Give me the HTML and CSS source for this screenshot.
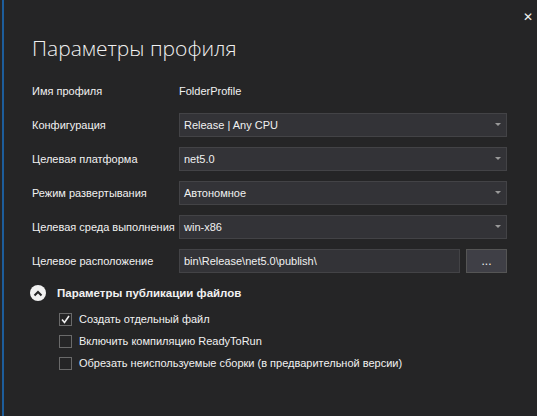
FILE: index.html
```html
<!DOCTYPE html>
<html lang="ru">
<head>
    <meta charset="UTF-8">
    <title>Параметры профиля</title>
    <link rel="stylesheet" href="styles.css">
</head>
<body>
    <div class="edge"></div>
    <div class="dialog">
        <button class="close">&#x2715;</button>
        <h1>Параметры профиля</h1>
        <div class="form">
            <div class="row">
                <label>Имя профиля</label>
                <span class="plain">FolderProfile</span>
            </div>
            <div class="row">
                <label>Конфигурация</label>
                <div class="select">Release | Any CPU<span class="arrow"></span></div>
            </div>
            <div class="row">
                <label>Целевая платформа</label>
                <div class="select">net5.0<span class="arrow"></span></div>
            </div>
            <div class="row">
                <label>Режим развертывания</label>
                <div class="select">Автономное<span class="arrow"></span></div>
            </div>
            <div class="row">
                <label>Целевая среда выполнения</label>
                <div class="select">win-x86<span class="arrow"></span></div>
            </div>
            <div class="row">
                <label>Целевое расположение</label>
                <div class="path">
                    <div class="text-box">bin\Release\net5.0\publish\</div>
                    <button class="browse">...</button>
                </div>
            </div>
        </div>
        <div class="expander">
            <span class="toggle">
                <svg width="10" height="7" viewBox="0 0 10 7"><path d="M1.5 5.5 L5 2 L8.5 5.5" fill="none" stroke="#252526" stroke-width="2"/></svg>
            </span>
            <span class="expander-title">Параметры публикации файлов</span>
        </div>
        <div class="options">
            <div class="check-row">
                <span class="check checked">
                    <svg width="11" height="11" viewBox="0 0 11 11"><path d="M2 5.5 L4.5 8.5 L9 2" fill="none" stroke="#f1f1f1" stroke-width="1.6"/></svg>
                </span>
                <span>Создать отдельный файл</span>
            </div>
            <div class="check-row">
                <span class="check"></span>
                <span>Включить компиляцию ReadyToRun</span>
            </div>
            <div class="check-row">
                <span class="check"></span>
                <span>Обрезать неиспользуемые сборки (в предварительной версии)</span>
            </div>
        </div>
    </div>
</body>
</html>
```
FILE: styles.css
```css
html, body {
    margin: 0;
    padding: 0;
    height: 100%;
}
body {
    display: flex;
    background-color: #252526;
    color: #f1f1f1;
    font-family: 'Liberation Sans', Arial, sans-serif;
    font-size: 11px;
    overflow: hidden;
}
.edge {
    width: 2px;
    margin-left: 2px;
    background-color: #1d5d9b;
    flex-shrink: 0;
}
.dialog {
    position: relative;
    flex: 1;
    padding: 0 0 0 28px;
}
.close {
    position: absolute;
    top: 10px;
    right: 4px;
    background: none;
    border: none;
    color: #f1f1f1;
    font-family: 'DejaVu Sans', sans-serif;
    font-size: 12px;
    padding: 0;
    cursor: pointer;
}
h1 {
    font-family: 'Open Sans', 'Noto Sans', sans-serif;
    font-weight: 300;
    font-size: 21px;
    margin: 33px 0 16px;
    line-height: 30px;
}
.form {
    width: 475px;
}
.row {
    display: flex;
    align-items: center;
    height: 24px;
    margin-bottom: 10px;
    white-space: nowrap;
}
.row label {
    width: 147px;
    flex-shrink: 0;
}
.select, .text-box {
    flex: 1;
    position: relative;
    height: 22px;
    line-height: 22px;
    padding: 0 4px;
    background-color: #333337;
    border: 1px solid #434346;
}
.arrow {
    position: absolute;
    right: 5px;
    top: 9px;
    border-left: 3px solid transparent;
    border-right: 3px solid transparent;
    border-top: 3px solid #999999;
}
.path {
    flex: 1;
    display: flex;
    gap: 6px;
}
.browse {
    width: 41px;
    height: 24px;
    background-color: #3f3f46;
    border: 1px solid #555555;
    color: #f1f1f1;
    font-size: 12px;
    line-height: 14px;
    padding: 0;
}
.expander {
    display: flex;
    align-items: center;
    gap: 11px;
    margin: 0 0 0 -2px;
    height: 20px;
}
.toggle {
    width: 16px;
    height: 16px;
    border-radius: 50%;
    background-color: #f1f1f1;
    display: flex;
    align-items: center;
    justify-content: center;
}
.expander-title {
    font-weight: bold;
    font-size: 11.5px;
}
.options {
    padding: 5px 0 0 27px;
}
.check-row {
    display: flex;
    align-items: center;
    gap: 7px;
    height: 22px;
}
.check {
    width: 13px;
    height: 13px;
    border: 1px solid #6a6a6a;
    box-sizing: border-box;
    display: flex;
    align-items: center;
    justify-content: center;
}
.check svg {
    flex-shrink: 0;
}
```
